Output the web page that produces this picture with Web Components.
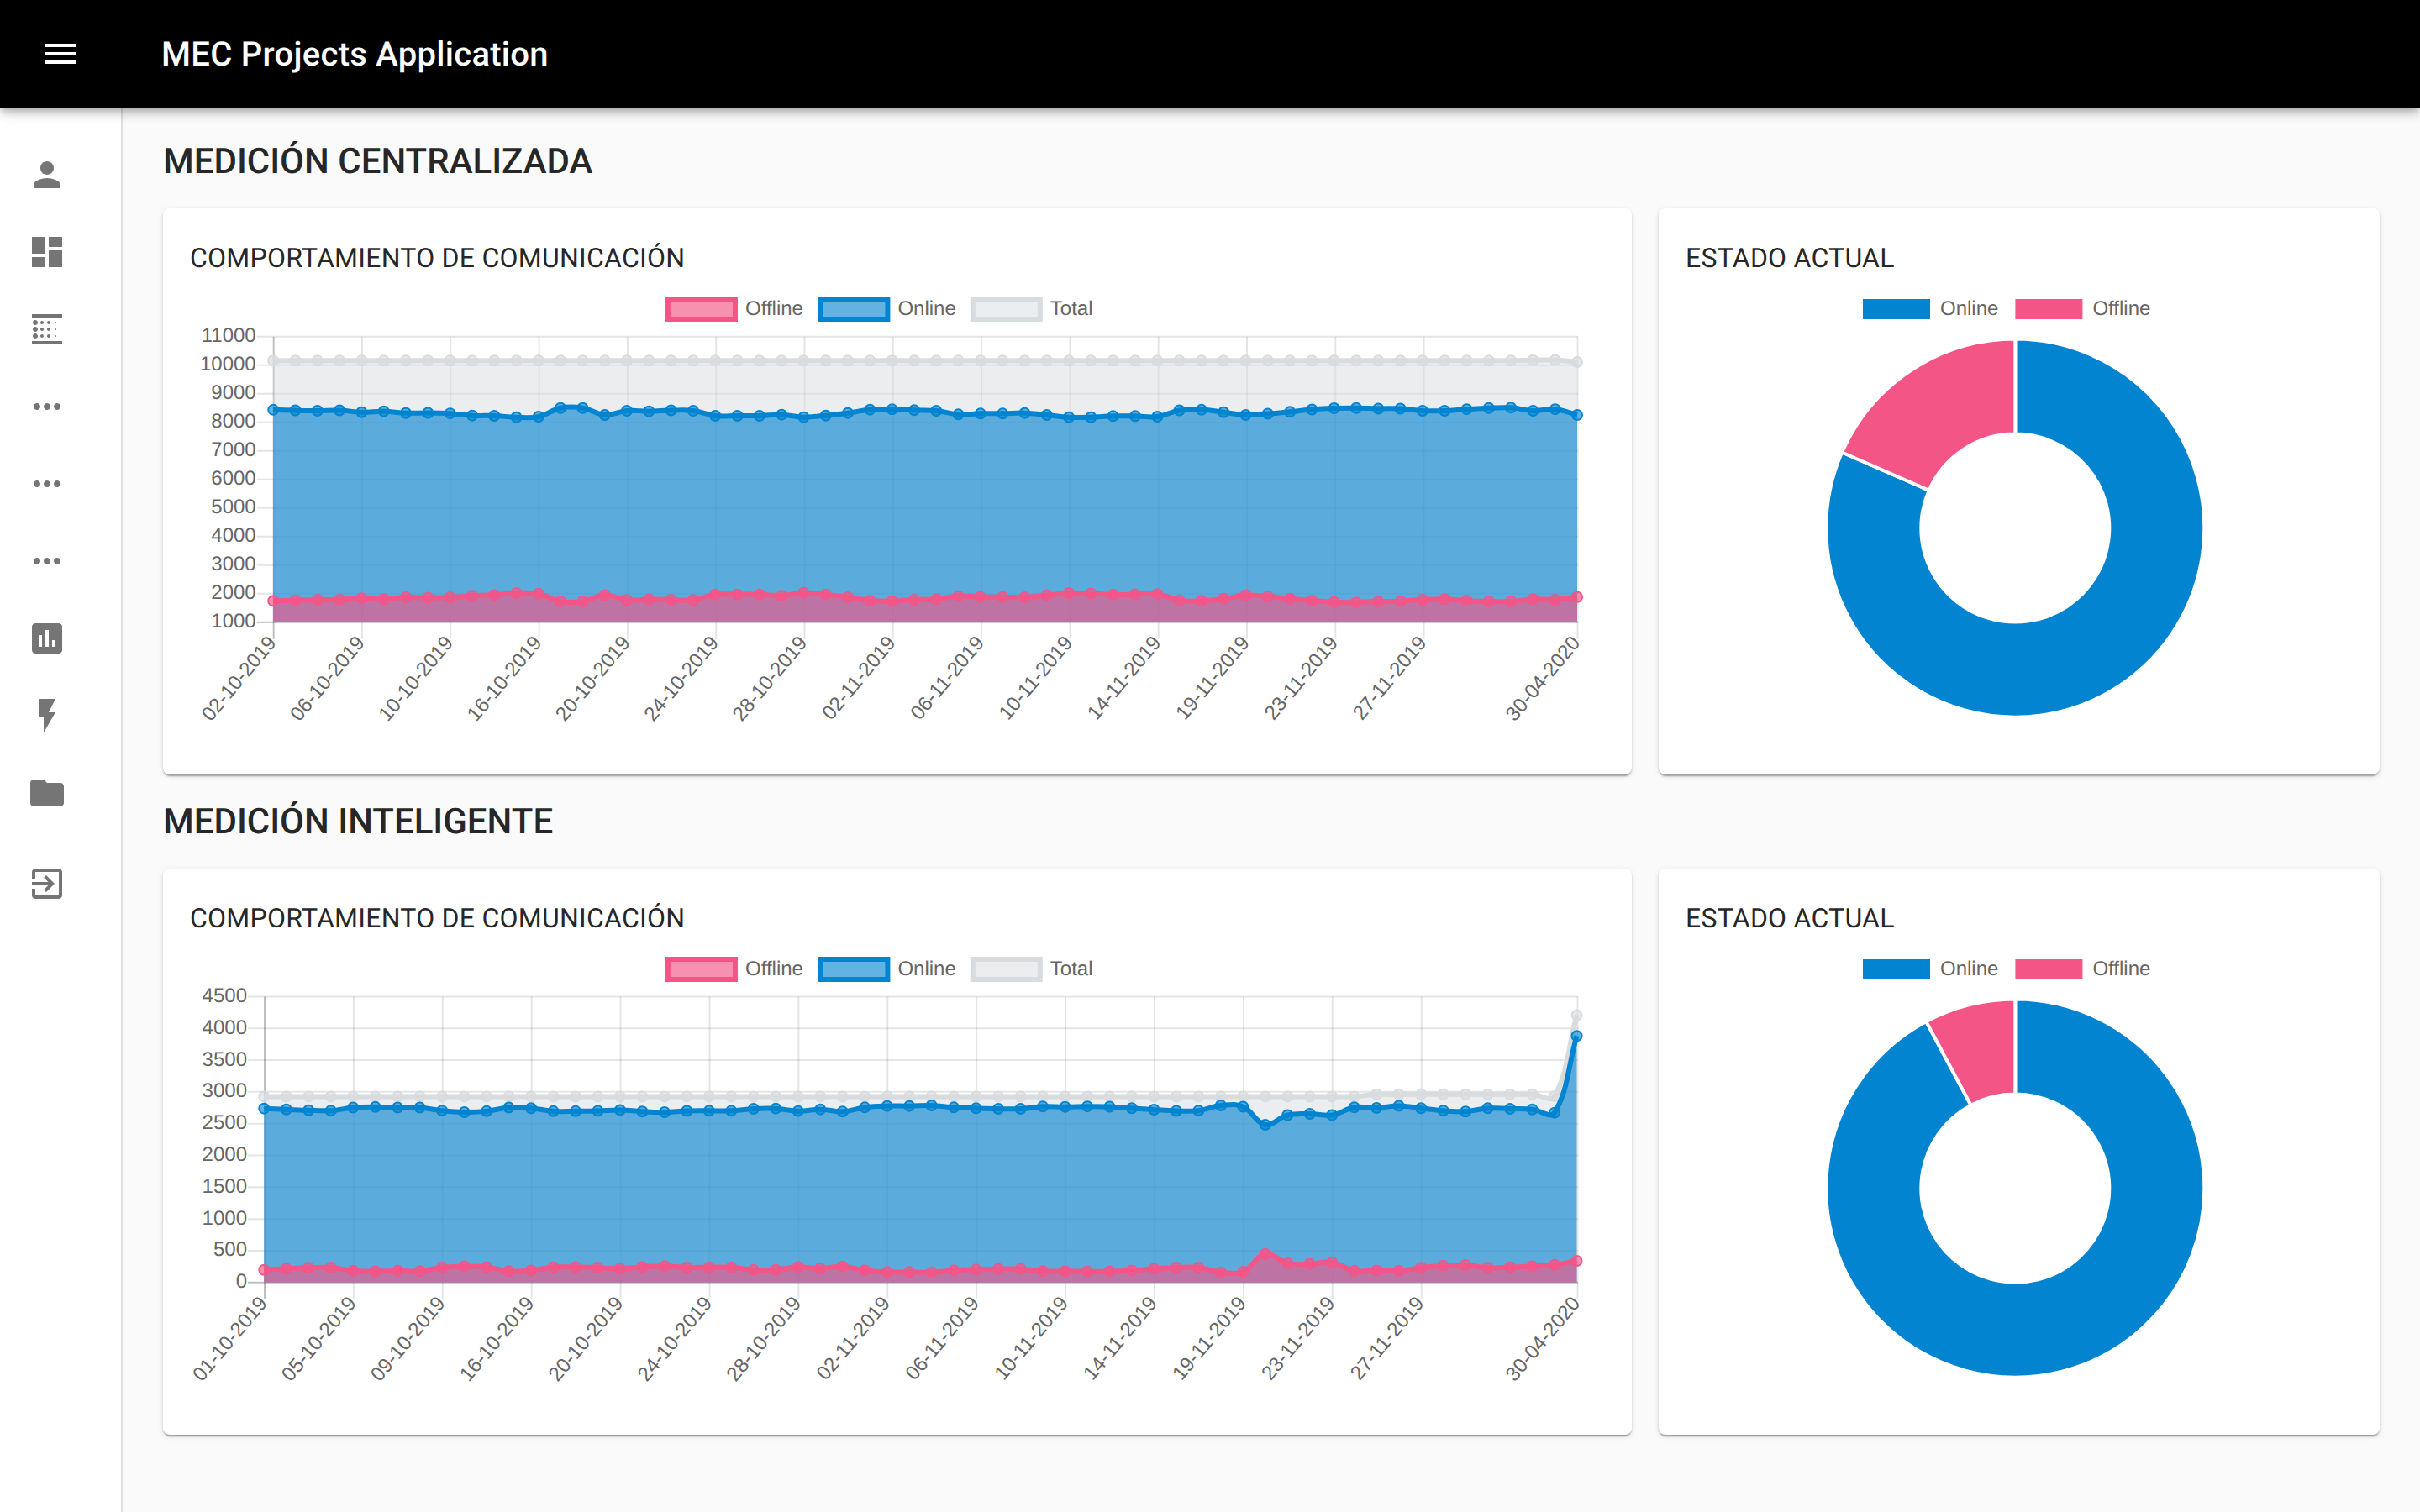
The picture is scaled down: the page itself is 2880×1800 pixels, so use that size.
<!DOCTYPE html>
<html lang="es">
<head>
<meta charset="utf-8">
<title>MEC Projects Application</title>
<style>
  html, body { margin: 0; height: 100%; background: #fafafa; overflow: hidden; font-family: Roboto, "Liberation Sans", sans-serif; text-rendering: geometricPrecision; }
</style>
</head>
<body>
<x-app>
  <x-appbar slot="bar">MEC Projects Application</x-appbar>
  <x-sidebar slot="side">
    <x-nav-item icon="person"></x-nav-item>
    <x-nav-item icon="dashboard"></x-nav-item>
    <x-nav-item icon="blur"></x-nav-item>
    <x-nav-item icon="more"></x-nav-item>
    <x-nav-item icon="more"></x-nav-item>
    <x-nav-item icon="more"></x-nav-item>
    <x-nav-item icon="assessment"></x-nav-item>
    <x-nav-item icon="flash"></x-nav-item>
    <x-nav-item icon="folder"></x-nav-item>
    <x-nav-item icon="exit" class="last" style="margin-top:16px"></x-nav-item>
  </x-sidebar>
  <x-section>
    <span slot="heading">MEDICIÓN CENTRALIZADA</span>
    <x-card heading="COMPORTAMIENTO DE COMUNICACIÓN"><x-line-chart set="central"></x-line-chart></x-card>
    <x-card heading="ESTADO ACTUAL"><x-donut-chart angle="66.4"></x-donut-chart></x-card>
  </x-section>
  <x-section>
    <span slot="heading">MEDICIÓN INTELIGENTE</span>
    <x-card heading="COMPORTAMIENTO DE COMUNICACIÓN"><x-line-chart set="smart"></x-line-chart></x-card>
    <x-card heading="ESTADO ACTUAL"><x-donut-chart angle="28.1"></x-donut-chart></x-card>
  </x-section>
</x-app>

<script>
const ICONS = {
  menu: 'M3 18h18v-2H3v2zm0-5h18v-2H3v2zm0-7v2h18V6H3z',
  person: 'M12 12c2.21 0 4-1.79 4-4s-1.79-4-4-4-4 1.79-4 4 1.79 4 4 4zm0 2c-2.67 0-8 1.34-8 4v2h16v-2c0-2.66-5.33-4-8-4z',
  dashboard: 'M3 13h8V3H3v10zm0 8h8v-6H3v6zm10 0h8V11h-8v10zm0-18v6h8V3h-8z',
  blur: 'M5 17.5c.83 0 1.5-.67 1.5-1.5s-.67-1.5-1.5-1.5-1.5.67-1.5 1.5.67 1.5 1.5 1.5zM9 13c.55 0 1-.45 1-1s-.45-1-1-1-1 .45-1 1 .45 1 1 1zm0-4c.55 0 1-.45 1-1s-.45-1-1-1-1 .45-1 1 .45 1 1 1zM3 21h18v-2H3v2zM5 9.5c.83 0 1.5-.67 1.5-1.5S5.83 6.5 5 6.5 3.5 7.17 3.5 8 4.17 9.5 5 9.5zm0 4c.83 0 1.5-.67 1.5-1.5s-.67-1.5-1.5-1.5-1.5.67-1.5 1.5.67 1.5 1.5 1.5zM9 17c.55 0 1-.45 1-1s-.45-1-1-1-1 .45-1 1 .45 1 1 1zm8-.5c.28 0 .5-.22.5-.5s-.22-.5-.5-.5-.5.22-.5.5.22.5.5.5zM3 3v2h18V3H3zm14 5.5c.28 0 .5-.22.5-.5s-.22-.5-.5-.5-.5.22-.5.5.22.5.5.5zm0 4c.28 0 .5-.22.5-.5s-.22-.5-.5-.5-.5.22-.5.5.22.5.5.5zM13 9c.55 0 1-.45 1-1s-.45-1-1-1-1 .45-1 1 .45 1 1 1zm0 4c.55 0 1-.45 1-1s-.45-1-1-1-1 .45-1 1 .45 1 1 1zm0 4c.55 0 1-.45 1-1s-.45-1-1-1-1 .45-1 1 .45 1 1 1z',
  more: 'M6 10c-1.1 0-2 .9-2 2s.9 2 2 2 2-.9 2-2-.9-2-2-2zm12 0c-1.1 0-2 .9-2 2s.9 2 2 2 2-.9 2-2-.9-2-2-2zm-6 0c-1.1 0-2 .9-2 2s.9 2 2 2 2-.9 2-2-.9-2-2-2z',
  assessment: 'M19 3H5c-1.1 0-2 .9-2 2v14c0 1.1.9 2 2 2h14c1.1 0 2-.9 2-2V5c0-1.1-.9-2-2-2zM9 17H7v-7h2v7zm4 0h-2V7h2v10zm4 0h-2v-4h2v4z',
  flash: 'M7 2v11h3v9l7-12h-4l4-8z',
  folder: 'M10 4H4c-1.1 0-1.99.9-1.99 2L2 18c0 1.1.9 2 2 2h16c1.1 0 2-.9 2-2V8c0-1.1-.9-2-2-2h-8l-2-2z',
  exit: 'M10.09 15.59L11.5 17l5-5-5-5-1.41 1.41L12.67 11H3v2h9.67l-2.58 2.59zM19 3H5c-1.11 0-2 .9-2 2v4h2V5h14v14H5v-4H3v4c0 1.1.89 2 2 2h14c1.1 0 2-.9 2-2V5c0-1.1-.9-2-2-2z'
};
const icon = (name, fill) => `<svg width="48" height="48" viewBox="0 0 24 24" fill="${fill}" style="display:block"><path d="${ICONS[name]}"/></svg>`;

const BLUE = '#0284d0', PINK = '#f45587', GRAY = '#d9dcdf';
const rgba = { [BLUE]: 'rgba(2,132,208,.62)', [PINK]: 'rgba(244,85,135,.65)', [GRAY]: 'rgba(217,220,223,.5)' };

class XApp extends HTMLElement {
  constructor() {
    super();
    this.attachShadow({ mode: 'open' }).innerHTML = `
      <style>
        :host { display: flex; flex-direction: column; height: 1800px; background: #fafafa; }
        .body { flex: 1; display: flex; min-height: 0; }
        main { flex: 1; min-width: 0; box-sizing: border-box; padding: 32px 48px 0; }
      </style>
      <slot name="bar"></slot>
      <div class="body"><slot name="side"></slot><main><slot></slot></main></div>`;
  }
}
class XAppbar extends HTMLElement {
  constructor() {
    super();
    this.attachShadow({ mode: 'open' }).innerHTML = `
      <style>
        :host { display: flex; align-items: center; height: 128px; background: #000; color: #fff; position: relative; z-index: 2;
          box-shadow: 0 4px 8px -2px rgba(0,0,0,.2), 0 8px 10px 0 rgba(0,0,0,.14), 0 2px 20px 0 rgba(0,0,0,.12); }
        .btn { margin-left: 48px; width: 48px; height: 48px; }
        h1 { margin: 2px 0 0 96px; font: 500 40px/1.6 Roboto, sans-serif; letter-spacing: .28px; white-space: nowrap; }
      </style>
      <div class="btn">${icon('menu', '#fff')}</div>
      <h1><slot></slot></h1>`;
  }
}
class XSidebar extends HTMLElement {
  constructor() {
    super();
    this.attachShadow({ mode: 'open' }).innerHTML = `
      <style>
        :host { display: block; flex: none; width: 144px; background: #fff; border-right: 2px solid rgba(0,0,0,.12); padding-top: 34px; }
      </style>
      <slot></slot>`;
  }
}
class XNavItem extends HTMLElement {
  constructor() { super(); this.attachShadow({ mode: 'open' }); }
  connectedCallback() {
    this.shadowRoot.innerHTML = `
      <style>:host { display: flex; align-items: center; height: 92px; padding-left: 32px; }</style>
      ${icon(this.getAttribute('icon'), 'rgba(0,0,0,.54)')}`;
  }
}
class XSection extends HTMLElement {
  constructor() {
    super();
    this.attachShadow({ mode: 'open' }).innerHTML = `
      <style>
        :host { display: block; margin-bottom: 24px; }
        h2 { margin: 0 0 22px; font: 500 42px/66px Roboto, sans-serif; color: rgba(0,0,0,.87); white-space: nowrap; }
        .grid { display: grid; grid-template-columns: minmax(0,1748fr) minmax(0,858fr); gap: 32px; }
      </style>
      <h2><slot name="heading"></slot></h2>
      <div class="grid"><slot></slot></div>`;
  }
}
class XCard extends HTMLElement {
  constructor() { super(); this.attachShadow({ mode: 'open' }); }
  connectedCallback() {
    this.shadowRoot.innerHTML = `
      <style>
        :host { display: block; background: #fff; border-radius: 8px; padding: 32px; min-width: 0;
          box-shadow: 0 4px 2px -2px rgba(0,0,0,.2), 0 2px 2px 0 rgba(0,0,0,.14), 0 2px 6px 0 rgba(0,0,0,.12); }
        h3 { margin: 0; font: 400 32px/55px Roboto, sans-serif; letter-spacing: .24px; color: rgba(0,0,0,.87); white-space: nowrap; }
      </style>
      <h3>${this.getAttribute('heading')}</h3>
      <slot></slot>`;
  }
}

const z3 = (a) => a.map(v => v / 2.8 + 330);
const zk = (a, o) => a.map(v => v / 3 + o);
const z5 = (a) => a.map(v => v / 2.8 + 1130);

const DATASETS = {
  central: {
    viewBox: '226 335 1684 555', x0: 325.2, x1: 1877, gridX0: 325.7, gridStep: 105.3,
    top: 400.7, bottom: 740.7, ticks: ['11000','10000','9000','8000','7000','6000','5000','4000','3000','2000','1000'],
    legendY: 353,
    labels: ['02-10-2019','06-10-2019','10-10-2019','16-10-2019','20-10-2019','24-10-2019','28-10-2019','02-11-2019','06-11-2019','10-11-2019','14-11-2019','19-11-2019','23-11-2019','27-11-2019'],
    blue: [...z3([442,444,445,444,450,447,453,452,454,461,462,467,465,436,436,459,445,447,444,445]),
      ...zk([285,285,285,281,290,284,275,263,262,265,267,280,277,277,275,282,290],400),
      ...z3([467,463,463,465,444,442,450,459,455,449,441,437,436,438,438,445,445,440,436,435,445,440,459])],
    pink: [...z3([1079,1077,1075,1075,1070,1073,1067,1068,1067,1062,1059,1053,1055,1081,1081,1060,1076,1074,1075,1076]),
      ...zk([113,113,113,118,107,113,123,135,137,132,130,119,122,122,123,116,108],670),
      ...z3([1054,1058,1057,1056,1077,1079,1072,1060,1064,1072,1078,1083,1084,1081,1080,1075,1073,1078,1081,1081,1073,1075,1066])],
    gray: [...Array(57).fill(429.3), 428.8, 428.6, 431]
  },
  smart: {
    viewBox: '226 1121 1684 555', x0: 314.3, x1: 1876.5, gridX0: 315, gridStep: 105.9,
    top: 1186.4, bottom: 1526.8, ticks: ['4500','4000','3500','3000','2500','2000','1500','1000','500','0'],
    legendY: 1139,
    labels: ['01-10-2019','05-10-2019','09-10-2019','16-10-2019','20-10-2019','24-10-2019','28-10-2019','02-11-2019','06-11-2019','10-11-2019','14-11-2019','19-11-2019','23-11-2019','27-11-2019'],
    blue: [...z5([531,534,537,538,528,526,528,528,538,543,540,528,530,540,540,539,536,541,543,539]),
      ...zk([127,127,120,119,128,122,130,115,110,110,108,115,118,120,120,112,113],1280),
      ...z5([524,525,530,535,539,538,521,525,585,553,549,553,527,529,522,530,538,541,530,532,534,545,289])],
    pink: [...z5([1069,1065,1062,1061,1072,1074,1072,1073,1061,1057,1060,1073,1071,1060,1060,1061,1065,1059,1056,1061]),
      ...zk([86,86,95,95,85,90,83,97,103,103,104,97,94,92,92,100,100],1480),
      ...z5([1074,1074,1071,1065,1061,1061,1077,1075,1016,1047,1049,1044,1072,1071,1072,1062,1055,1053,1062,1060,1057,1052,1039])],
    gray: [...Array(50).fill(1305.4), ...Array(8).fill(1302.8), 1305, 1208.6]
  }
};

function spline(pts) {
  const t = 0.4;
  const cps = pts.map((p, i) => {
    const a = pts[Math.max(i - 1, 0)], b = pts[Math.min(i + 1, pts.length - 1)];
    const d1 = Math.hypot(p[0] - a[0], p[1] - a[1]), d2 = Math.hypot(b[0] - p[0], b[1] - p[1]);
    const s = d1 + d2 || 1, fa = t * d1 / s, fb = t * d2 / s;
    return { p: [p[0] - fa * (b[0] - a[0]), p[1] - fa * (b[1] - a[1])], n: [p[0] + fb * (b[0] - a[0]), p[1] + fb * (b[1] - a[1])] };
  });
  let d = `M${pts[0][0].toFixed(2)} ${pts[0][1].toFixed(2)}`;
  for (let i = 1; i < pts.length; i++) {
    const c1 = cps[i - 1].n, c2 = cps[i].p, e = pts[i];
    d += `C${c1[0].toFixed(2)} ${c1[1].toFixed(2)} ${c2[0].toFixed(2)} ${c2[1].toFixed(2)} ${e[0].toFixed(2)} ${e[1].toFixed(2)}`;
  }
  return d;
}

const TXT = 'font-family="Liberation Sans, Arial, sans-serif" font-size="24" fill="#666"';

class XLineChart extends HTMLElement {
  constructor() { super(); this.attachShadow({ mode: 'open' }); }
  connectedCallback() {
    const D = DATASETS[this.getAttribute('set')];
    const right = 1878, n = 60;
    const xs = i => D.x0 + i * (D.x1 - D.x0) / (n - 1);
    let s = '';
    const dy = (D.bottom - D.top) / (D.ticks.length - 1);
    D.ticks.forEach((t, i) => {
      const y = D.top + i * dy, last = i === D.ticks.length - 1;
      s += `<line x1="${D.gridX0 - 20}" x2="${right}" y1="${y}" y2="${y}" stroke="rgba(0,0,0,${last ? .25 : .1})" stroke-width="2"/>`;
      s += `<text x="${D.gridX0 - 21}" y="${y + 6.5}" text-anchor="end" ${TXT}>${t}</text>`;
    });
    const gx = D.labels.map((_, i) => D.gridX0 + i * D.gridStep).concat(1877.5);
    const labels = D.labels.concat('30-04-2020');
    gx.forEach((x, i) => {
      s += `<line x1="${x}" x2="${x}" y1="${D.top}" y2="${D.bottom + 20}" stroke="rgba(0,0,0,${i === 0 ? .25 : .1})" stroke-width="2"/>`;
      s += `<text transform="translate(${x - 2} ${D.bottom + 20}) rotate(-50)" dy="8" text-anchor="end" ${TXT}>${labels[i]}</text>`;
    });
    [[D.gray, GRAY, 'rgba(217,220,223,.65)'], [D.blue, BLUE, rgba[BLUE]], [D.pink, PINK, rgba[PINK]]].forEach(([ys, col, pf]) => {
      const pts = ys.map((y, i) => [xs(i), y]);
      const d = spline(pts);
      s += `<path d="${d}L${xs(n - 1)} ${D.bottom}L${xs(0)} ${D.bottom}Z" fill="${rgba[col]}"/>`;
      s += `<path d="${d}" fill="none" stroke="${col}" stroke-width="6" stroke-linejoin="bevel"/>`;
      pts.forEach(p => { s += `<circle cx="${p[0].toFixed(2)}" cy="${p[1].toFixed(2)}" r="6" fill="${pf}" stroke="${col}" stroke-width="2"/>`; });
    });
    [[795, PINK, 'Offline', 887], [976.4, BLUE, 'Online', 1068.4], [1157.8, GRAY, 'Total', 1249.8]].forEach(([x, col, label, tx]) => {
      s += `<rect x="${x}" y="${D.legendY + 3}" width="80" height="24" fill="${rgba[col]}" stroke="${col}" stroke-width="6"/>`;
      s += `<text x="${tx}" y="${D.legendY + 22}" ${TXT}>${label}</text>`;
    });
    this.shadowRoot.innerHTML = `
      <style>:host { display: block; } svg { display: block; width: 1684px; height: 555px; overflow: visible; }</style>
      <svg viewBox="${D.viewBox}">${s}</svg>`;
  }
}

class XDonutChart extends HTMLElement {
  constructor() { super(); this.attachShadow({ mode: 'open' }); }
  connectedCallback() {
    const a = +this.getAttribute('angle') * Math.PI / 180;
    const cx = 2398.3, cy = 628.6, R = 225, r = 112;
    const pt = (rad, ang) => [(cx + rad * Math.sin(ang)).toFixed(2), (cy - rad * Math.cos(ang)).toFixed(2)];
    const arc = (a0, a1, fill) => {
      const large = a1 - a0 > Math.PI ? 1 : 0;
      const [x0, y0] = pt(R, a0), [x1, y1] = pt(R, a1), [x2, y2] = pt(r, a1), [x3, y3] = pt(r, a0);
      return `<path d="M${x0} ${y0}A${R} ${R} 0 ${large} 1 ${x1} ${y1}L${x2} ${y2}A${r} ${r} 0 ${large} 0 ${x3} ${y3}Z" fill="${fill}" stroke="#fff" stroke-width="4"/>`;
    };
    let s = arc(0, 2 * Math.PI - a, BLUE) + arc(2 * Math.PI - a, 2 * Math.PI, PINK);
    s += `<rect x="2217" y="356" width="80" height="24" fill="${BLUE}"/><text x="2309" y="375" ${TXT}>Online</text>`;
    s += `<rect x="2398.4" y="356" width="80" height="24" fill="${PINK}"/><text x="2490.4" y="375" ${TXT}>Offline</text>`;
    this.shadowRoot.innerHTML = `
      <style>:host { display: block; } svg { display: block; width: 794px; height: 555px; }</style>
      <svg viewBox="2006 335 794 555">${s}</svg>`;
  }
}

customElements.define('x-app', XApp);
customElements.define('x-appbar', XAppbar);
customElements.define('x-sidebar', XSidebar);
customElements.define('x-nav-item', XNavItem);
customElements.define('x-section', XSection);
customElements.define('x-card', XCard);
customElements.define('x-line-chart', XLineChart);
customElements.define('x-donut-chart', XDonutChart);
</script>
</body>
</html>
